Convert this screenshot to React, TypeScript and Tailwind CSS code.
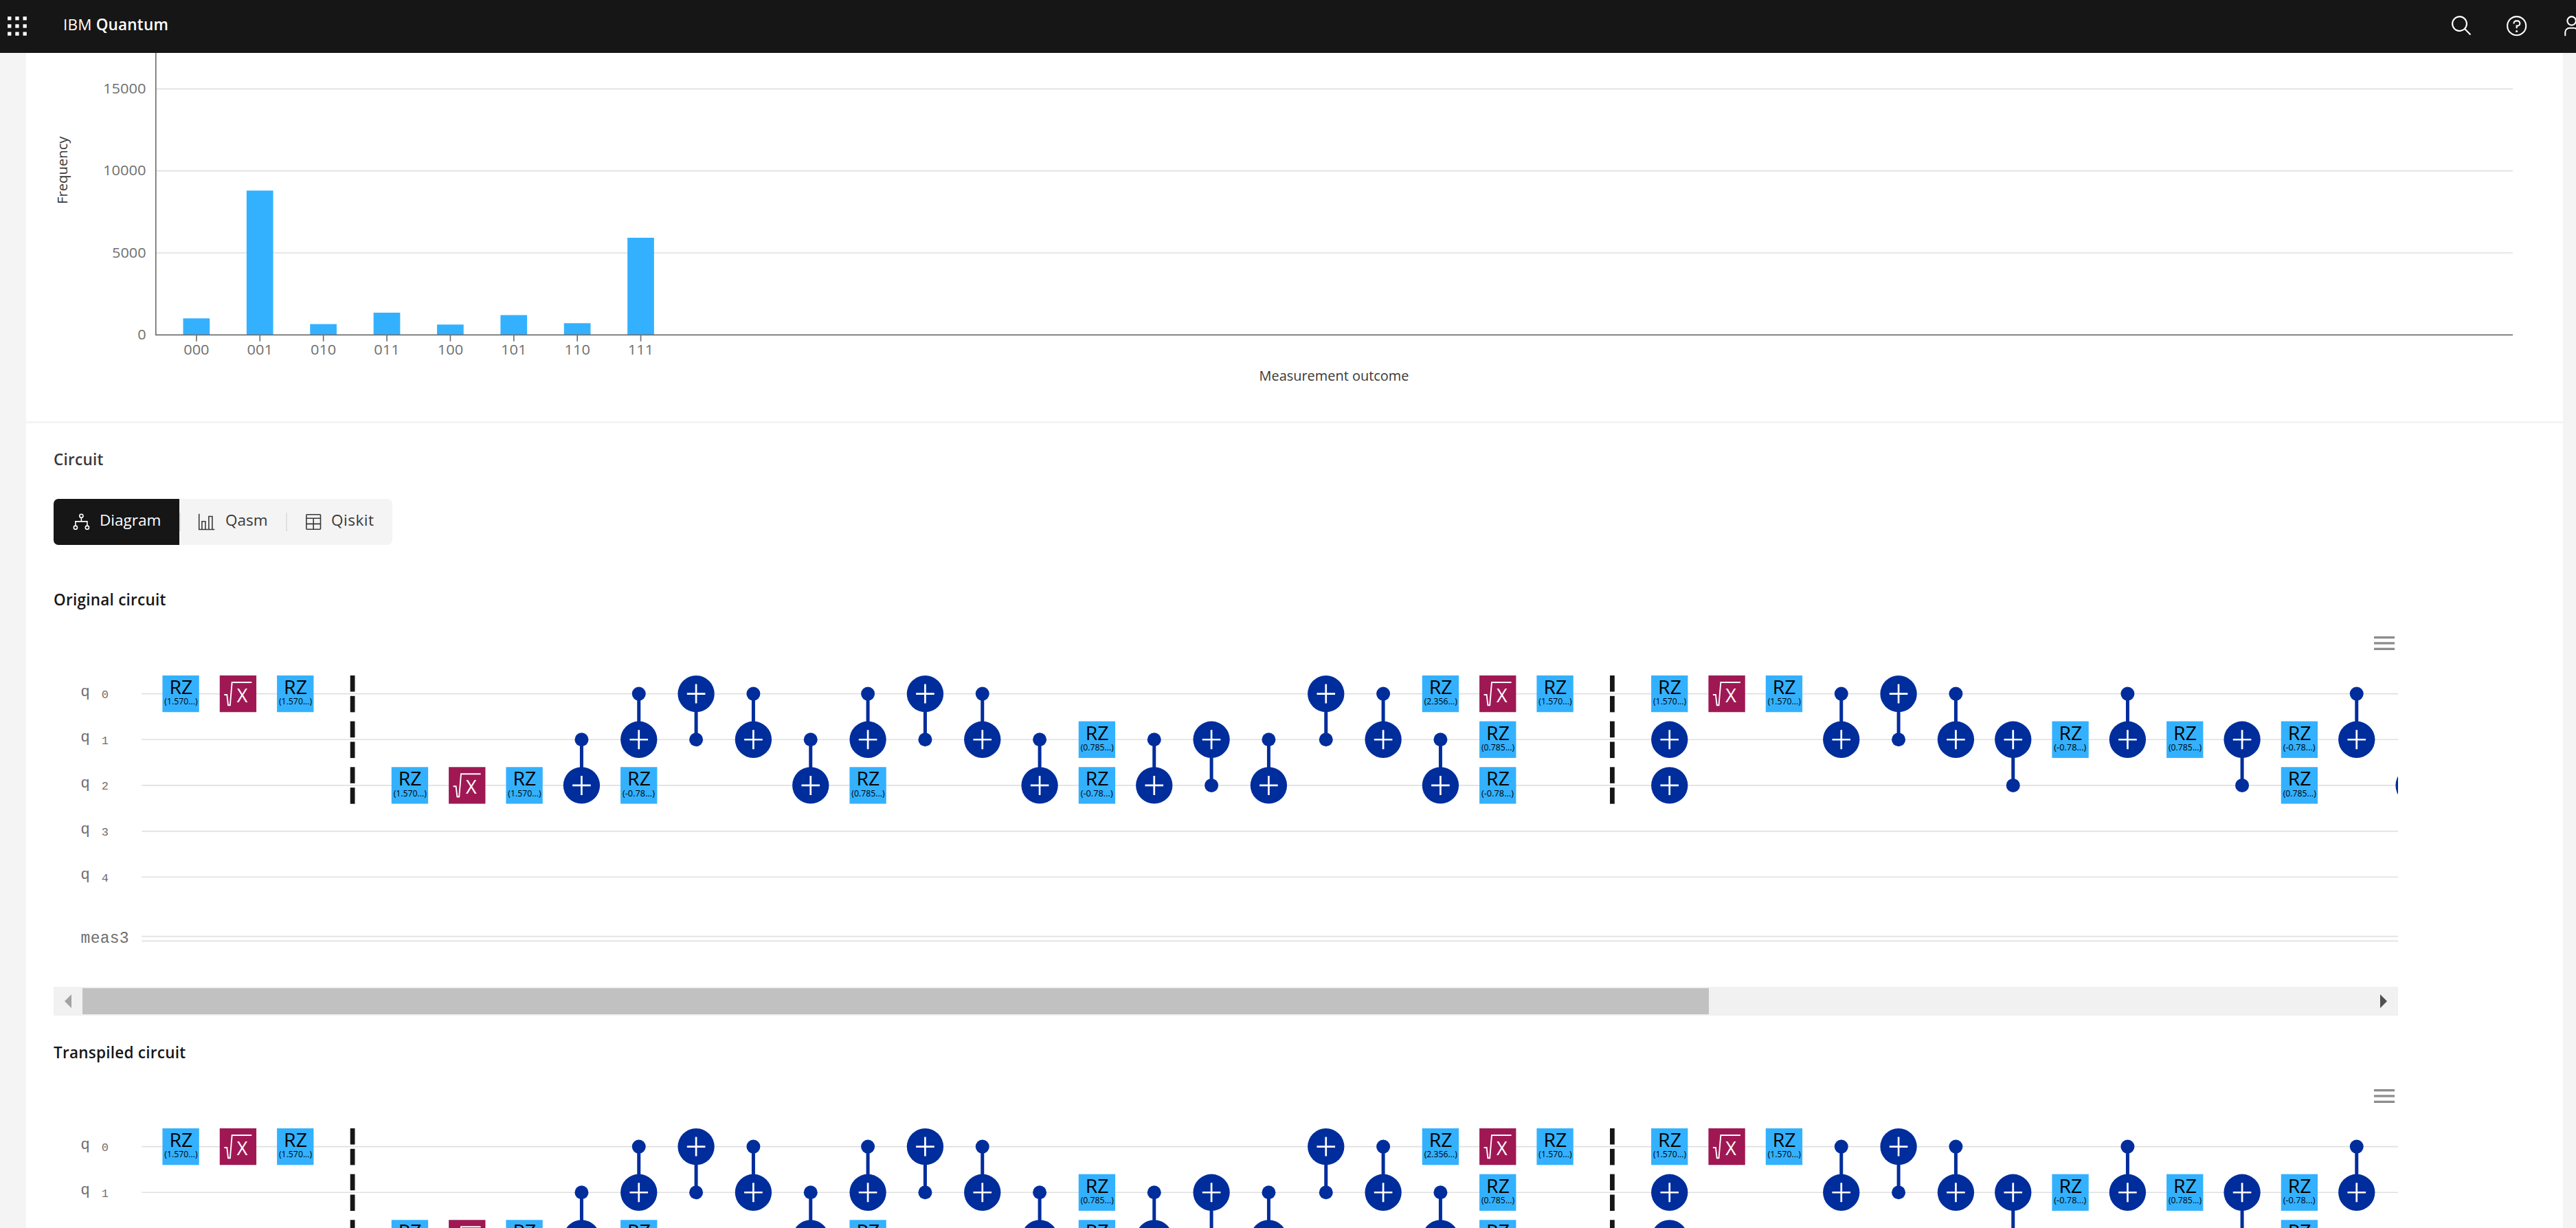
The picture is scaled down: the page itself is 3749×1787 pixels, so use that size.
import type { ReactNode } from 'react';

const SANS = "font-['Open_Sans','Noto_Sans',sans-serif]";
const MONO = "font-['Liberation_Mono',monospace]";

/* ---------- Header ---------- */

function AppsIcon() {
  const steps = [0, 11.2, 22.4];
  return (
    <svg width="30" height="30" viewBox="0 0 30 30" fill="#fff">
      {steps.map((y) => steps.map((x) => <rect key={`${x}-${y}`} x={x + 1.1} y={y + 1.1} width="5.3" height="5.3" />))}
    </svg>
  );
}

function HeaderIcon({ children }: { children: ReactNode }) {
  return (
    <button className="flex h-[77px] w-20 shrink-0 items-center justify-center pb-[2px]">
      <svg width="33.33" height="33.33" viewBox="0 0 32 32" fill="#fff">
        {children}
      </svg>
    </button>
  );
}

function Header() {
  return (
    <header className="flex h-[77px] shrink-0 items-center overflow-hidden bg-[#161616] text-white">
      <button className="ml-[10px] pb-[2px]">
        <AppsIcon />
      </button>
      <div className="ml-[52px] whitespace-nowrap pb-[6px] text-[22.5px] leading-[30px] tracking-[0.2px]">
        IBM <span className="font-semibold">Quantum</span>
      </div>
      <div className="-mr-[34px] ml-auto flex">
        <HeaderIcon>
          <path d="M29,27.5859l-7.5521-7.5521a11.0177,11.0177,0,1,0-1.4141,1.4141L27.5859,29ZM4,13a9,9,0,1,1,9,9A9.01,9.01,0,0,1,4,13Z" />
        </HeaderIcon>
        <HeaderIcon>
          <path d="M16,2A14,14,0,1,0,30,16,14,14,0,0,0,16,2Zm0,26A12,12,0,1,1,28,16,12,12,0,0,1,16,28Z" />
          <circle cx="16" cy="23.5" r="1.5" />
          <path d="M17,8H15.5A4.49,4.49,0,0,0,11,12.5V13h2v-.5A2.5,2.5,0,0,1,15.5,10H17a2.5,2.5,0,0,1,0,5H15v4.5h2V17a4.5,4.5,0,0,0,0-9Z" />
        </HeaderIcon>
        <HeaderIcon>
          <path d="M16,4a5,5,0,1,1-5,5,5,5,0,0,1,5-5m0-2a7,7,0,1,0,7,7A7,7,0,0,0,16,2Z" />
          <path d="M26,30H24V25a5,5,0,0,0-5-5H13a5,5,0,0,0-5,5v5H6V25a7,7,0,0,1,7-7h6a7,7,0,0,1,7,7Z" />
        </HeaderIcon>
      </div>
    </header>
  );
}

/* ---------- Histogram ---------- */

const BARS = [
  { label: '000', height: 24 },
  { label: '001', height: 210 },
  { label: '010', height: 15.7 },
  { label: '011', height: 32.3 },
  { label: '100', height: 15 },
  { label: '101', height: 28.8 },
  { label: '110', height: 17 },
  { label: '111', height: 141.3 },
];

const TICKS = [
  { label: '15000', y: 52.3, width: 62.5 },
  { label: '10000', y: 171.6, width: 62.5 },
  { label: '5000', y: 291, width: 49.5 },
  { label: '0', y: 410.3, width: 12.4 },
];

function Histogram() {
  const baseline = 410.3;
  return (
    <svg className={`block ${SANS}`} width="3692" height="536" viewBox="0 0 3692 536">
      {TICKS.slice(0, 3).map((t) => (
        <line key={t.label} x1="188.8" x2="3619" y1={t.y} y2={t.y} stroke="#e0e0e0" strokeWidth="1.67" />
      ))}
      {BARS.map((b, i) => (
        <rect key={b.label} x={228.5 + i * 92.38} y={baseline - b.height} width="38.7" height={b.height} fill="#33b1ff" />
      ))}
      <g stroke="#6f6f6f" strokeWidth="1.67">
        <line x1="188.8" x2="188.8" y1="0" y2={baseline} />
        <line x1="188" x2="3619" y1={baseline} y2={baseline} />
        {BARS.map((b, i) => (
          <line key={b.label} x1={247.9 + i * 92.38} x2={247.9 + i * 92.38} y1={baseline} y2={baseline + 9.5} />
        ))}
      </g>
      <g fill="#6f6f6f" fontSize="19.6">
        {TICKS.map((t) => (
          <text key={t.label} x={174.6 - t.width} y={t.y + 6.8} textLength={t.width} lengthAdjust="spacingAndGlyphs">
            {t.label}
          </text>
        ))}
        {BARS.map((b, i) => (
          <text key={b.label} x={229.2 + i * 92.38} y="438.8" textLength="37.4" lengthAdjust="spacingAndGlyphs">
            {b.label}
          </text>
        ))}
      </g>
      <g fill="#393939" fontSize="19.6">
        <text x="1794.5" y="476.5" textLength="218" lengthAdjust="spacingAndGlyphs">
          Measurement outcome
        </text>
        <text transform="translate(60 220) rotate(-90)" x="0" y="0" textLength="98.5" lengthAdjust="spacingAndGlyphs">
          Frequency
        </text>
      </g>
    </svg>
  );
}

/* ---------- View switcher ---------- */

function DiagramIcon() {
  return (
    <svg width="27" height="27" viewBox="0 0 27 27" fill="none" stroke="currentColor" strokeWidth="1.6">
      <circle cx="13.4" cy="4.8" r="2.6" />
      <circle cx="4.9" cy="21.7" r="2.6" />
      <circle cx="21.9" cy="21.7" r="2.6" />
      <path d="M13.4 7.4v5.5M4.9 19.1v-6.2h17v6.2" />
    </svg>
  );
}

function BarsIcon() {
  return (
    <svg width="27" height="27" viewBox="0 0 27 27" fill="none" stroke="currentColor" strokeWidth="1.6">
      <path d="M2.7 1.7v22.8h22.6M6.9 24.5V12.7h5v11.8M16.9 24.5V5.5h5v19" />
    </svg>
  );
}

function TableIcon() {
  return (
    <svg width="27" height="27" viewBox="0 0 27 27" fill="none" stroke="currentColor" strokeWidth="1.6">
      <rect x="2.9" y="2.8" width="20.6" height="21.4" rx="1" />
      <path d="M2.9 8.3h20.6M2.9 16.4h20.6M13.2 8.3v15.9" />
    </svg>
  );
}

function ViewSwitcher() {
  return (
    <div className="mt-[42px] flex h-[67px] w-[493px] items-center overflow-hidden rounded-[7px] bg-[#f4f4f4] text-[22.5px] leading-[30px] text-[#393939]">
      <button className="flex h-full w-[183px] items-center bg-[#161616] pl-[27px] text-white">
        <DiagramIcon />
        <span className="ml-[13px] pb-[5px]">Diagram</span>
      </button>
      <span className="h-[27px] w-[2px] bg-[#e0e0e0]" />
      <button className="flex h-full w-[153px] items-center pl-[24px]">
        <BarsIcon />
        <span className="ml-[14px] pb-[5px]">Qasm</span>
      </button>
      <span className="h-[27px] w-[2px] bg-[#e0e0e0]" />
      <button className="flex h-full items-center pl-[25px]">
        <TableIcon />
        <span className="ml-[12px] pb-[5px] tracking-[0.5px]">Qiskit</span>
      </button>
    </div>
  );
}

/* ---------- Circuit diagram ---------- */

type Op =
  | { kind: 'rz'; col: number; q: number; angle: string }
  | { kind: 'sx'; col: number; q: number }
  | { kind: 'x'; col: number; q: number }
  | { kind: 'cx'; col: number; c: number; t: number }
  | { kind: 'barrier'; col: number };

const rz = (col: number, q: number, angle: string): Op => ({ kind: 'rz', col, q, angle });
const sx = (col: number, q: number): Op => ({ kind: 'sx', col, q });
const x = (col: number, q: number): Op => ({ kind: 'x', col, q });
const cx = (col: number, c: number, t: number): Op => ({ kind: 'cx', col, c, t });
const barrier = (col: number): Op => ({ kind: 'barrier', col });

const HALF_PI = '(1.570...)';
const QUARTER = '(0.785...)';
const NEG_QUARTER = '(-0.78...)';

const OPS: Op[] = [
  rz(0, 0, HALF_PI), sx(1, 0), rz(2, 0, HALF_PI), barrier(3),
  rz(4, 2, HALF_PI), sx(5, 2), rz(6, 2, HALF_PI),
  cx(7, 1, 2), cx(8, 0, 1), rz(8, 2, NEG_QUARTER), cx(9, 1, 0), cx(10, 0, 1),
  cx(11, 1, 2), cx(12, 0, 1), rz(12, 2, QUARTER), cx(13, 1, 0), cx(14, 0, 1),
  cx(15, 1, 2), rz(16, 1, QUARTER), rz(16, 2, NEG_QUARTER),
  cx(17, 1, 2), cx(18, 2, 1), cx(19, 1, 2), cx(20, 1, 0), cx(21, 0, 1),
  rz(22, 0, '(2.356...)'), cx(22, 1, 2),
  sx(23, 0), rz(23, 1, QUARTER), rz(23, 2, NEG_QUARTER), rz(24, 0, HALF_PI),
  barrier(25),
  rz(26, 0, HALF_PI), x(26, 1), x(26, 2), sx(27, 0), rz(28, 0, HALF_PI),
  cx(29, 0, 1), cx(30, 1, 0), cx(31, 0, 1), cx(32, 2, 1), rz(33, 1, NEG_QUARTER),
  cx(34, 0, 1), rz(35, 1, QUARTER), cx(36, 2, 1), rz(37, 1, NEG_QUARTER), rz(37, 2, QUARTER),
  cx(38, 0, 1), cx(39, 1, 2),
];

const colX = (col: number) => 185.1 + col * 83.333;
const rowY = (q: number) => 121.6 + q * 66.667;
const GATE = 53.33;

function Target({ cx: px, cy }: { cx: number; cy: number }) {
  return (
    <g>
      <circle cx={px} cy={cy} r={GATE / 2} fill="#002d9c" />
      <path d={`M${px - 13.3} ${cy}h26.6M${px} ${cy - 14}v28`} stroke="#fff" strokeWidth="2.7" />
    </g>
  );
}

function Gate({ op }: { op: Op }) {
  const px = colX(op.col);
  if (op.kind === 'barrier') {
    return (
      <g fill="#161616">
        {[0, 1, 2].map((q) => (
          <g key={q}>
            <rect x={px - 3.4} y={rowY(q) - GATE / 2} width="6.8" height="23.6" />
            <rect x={px - 3.4} y={rowY(q) + 3.2} width="6.8" height="23.6" />
          </g>
        ))}
      </g>
    );
  }
  if (op.kind === 'cx') {
    return (
      <g>
        <line x1={px} x2={px} y1={rowY(op.c)} y2={rowY(op.t)} stroke="#002d9c" strokeWidth="5" />
        <circle cx={px} cy={rowY(op.c)} r="10" fill="#002d9c" />
        <Target cx={px} cy={rowY(op.t)} />
      </g>
    );
  }
  if (op.kind === 'x') return <Target cx={px} cy={rowY(op.q)} />;
  const left = px - GATE / 2;
  const top = rowY(op.q) - GATE / 2;
  if (op.kind === 'sx') {
    return (
      <g transform={`translate(${left} ${top})`}>
        <rect width={GATE} height={GATE} fill="#9f1853" />
        <path d="M6.5 28h4l1.8 15.3h2.8L17.9 10h28.6" fill="none" stroke="#fff" strokeWidth="1.9" />
        <text x="32.7" y="39" fontSize="27" fill="#fff" textAnchor="middle">
          X
        </text>
      </g>
    );
  }
  return (
    <g transform={`translate(${left} ${top})`}>
      <rect width={GATE} height={GATE} fill="#33b1ff" />
      <text x="10" y="27" fontSize="26.8" fill="#000" textLength="33.8" lengthAdjust="spacingAndGlyphs">
        RZ
      </text>
      <text
        x="2.9"
        y="42.3"
        fontSize="12"
        fill="#000"
        textLength={op.angle === NEG_QUARTER ? 47 : 48.2}
        lengthAdjust="spacingAndGlyphs"
      >
        {op.angle}
      </text>
    </g>
  );
}

function CircuitDiagram({ rows }: { rows: number }) {
  const qubits = [0, 1, 2, 3, 4].slice(0, rows);
  return (
    <svg className={`block overflow-hidden ${SANS}`} width="3412" height="548" viewBox="0 0 3412 548">
      <g fill="#8d8d8d">
        <rect x="3377" y="38" width="30" height="3.3" />
        <rect x="3377" y="46.3" width="30" height="3.3" />
        <rect x="3377" y="54.7" width="30" height="3.3" />
      </g>
      <g className={MONO} fill="#6f6f6f">
        {qubits.map((q) => (
          <g key={q}>
            <text x="39.3" y={rowY(q) + 3} fontSize="22.6">
              q
            </text>
            <text x="69.8" y={rowY(q) + 6.5} fontSize="17">
              {q}
            </text>
          </g>
        ))}
        {rows === 5 && (
          <text x="39.6" y="484" fontSize="23" textLength="70">
            meas3
          </text>
        )}
      </g>
      <g stroke="#e0e0e0" strokeWidth="1.67">
        {[0, 1, 2, 3, 4].map((q) => (
          <line key={q} x1="128.3" x2="3412" y1={rowY(q)} y2={rowY(q)} />
        ))}
        <line x1="128.3" x2="3412" y1="474.7" y2="474.7" />
        <line x1="128.3" x2="3412" y1="481.3" y2="481.3" />
      </g>
      {OPS.map((op, i) => (
        <Gate key={i} op={op} />
      ))}
    </svg>
  );
}

function ScrollBar() {
  return (
    <div className="flex h-[42px] w-[3412px] items-center bg-[#f1f1f1]">
      <svg className="ml-[16px]" width="10" height="20" viewBox="0 0 10 20" fill="#a3a3a3">
        <path d="M10 0v20L0 10z" />
      </svg>
      <div className="ml-[16px] h-[38px] w-[2367px] bg-[#c1c1c1]" />
      <svg className="ml-auto mr-[16px]" width="10" height="20" viewBox="0 0 10 20" fill="#505050">
        <path d="M0 0v20l10-10z" />
      </svg>
    </div>
  );
}

export default function App() {
  return (
    <div className={`flex h-[1787px] w-[3749px] flex-col overflow-hidden bg-[#f4f4f4] ${SANS}`}>
      <Header />
      <main className="ml-[38px] mr-[19px] min-h-0 flex-1 overflow-hidden bg-white">
        <section className="h-[539px] border-b-[3px] border-[#f4f4f4]">
          <Histogram />
        </section>
        <section className="px-[40px] pt-[38px] text-[#161616]">
          <h2 className="h-[30px] text-[22.5px] font-semibold leading-[29px] tracking-[0.25px] text-[#393939]">Circuit</h2>
          <ViewSwitcher />
          <h3 className="mt-[65px] h-[30px] text-[22.5px] font-semibold leading-[29px] tracking-[0.25px]">Original circuit</h3>
          <CircuitDiagram rows={5} />
          <ScrollBar />
          <h3 className="mt-[39px] h-[30px] text-[22.5px] font-semibold leading-[29px] tracking-[0.25px]">
            Transpiled circuit
          </h3>
          <CircuitDiagram rows={2} />
        </section>
      </main>
    </div>
  );
}
